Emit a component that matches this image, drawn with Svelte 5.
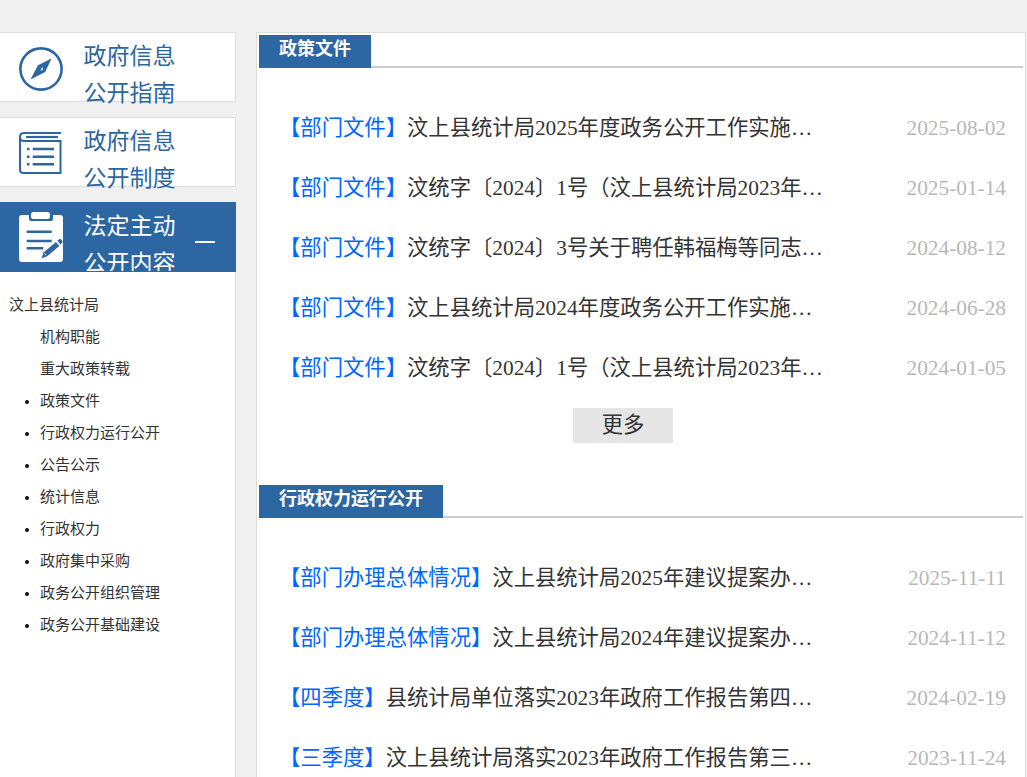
<script>
  const sub = [
    { t: '机构职能', plain: true },
    { t: '重大政策转载', plain: true },
    { t: '政策文件' },
    { t: '行政权力运行公开' },
    { t: '公告公示' },
    { t: '统计信息' },
    { t: '行政权力' },
    { t: '政府集中采购' },
    { t: '政务公开组织管理' },
    { t: '政务公开基础建设' }
  ];
  const sections = [
    {
      title: '政策文件',
      more: true,
      rows: [
        ['部门文件', '汶上县统计局2025年度政务公开工作实施方案的通知', '2025-08-02'],
        ['部门文件', '汶统字〔2024〕1号（汶上县统计局2023年度工作报告）', '2025-01-14'],
        ['部门文件', '汶统字〔2024〕3号关于聘任韩福梅等同志的通知文件', '2024-08-12'],
        ['部门文件', '汶上县统计局2024年度政务公开工作实施方案的通知', '2024-06-28'],
        ['部门文件', '汶统字〔2024〕1号（汶上县统计局2023年度工作报告）', '2024-01-05']
      ]
    },
    {
      title: '行政权力运行公开',
      rows: [
        ['部门办理总体情况', '汶上县统计局2025年建议提案办理工作总体情况', '2025-11-11'],
        ['部门办理总体情况', '汶上县统计局2024年建议提案办理工作总体情况', '2024-11-12'],
        ['四季度', '县统计局单位落实2023年政府工作报告第四季度进展', '2024-02-19'],
        ['三季度', '汶上县统计局落实2023年政府工作报告第三季度进展', '2023-11-24']
      ]
    }
  ];
</script>

<div class="page">
  <aside class="side">
    <div class="card">
      <svg class="ico" viewBox="0 0 44 44" width="44" height="44">
        <circle cx="22" cy="22" r="20.6" fill="none" stroke="#2c66a3" stroke-width="2.6" />
        <path d="M32.5 11.5 L26.2 25 L19 18.2 Z M11.5 32.5 L19 18.2 L26.2 25 Z" fill="#2c66a3" />
        <path d="M23.2 20 L24.2 22.8 L21.4 23.6 Z" fill="#fff" />
      </svg>
      <div class="txt">政府信息<br />公开指南</div>
    </div>
    <div class="card">
      <svg class="ico" viewBox="0 0 44 44" width="44" height="44" fill="none" stroke="#2c66a3">
        <path d="M42 1 H5 Q1 1 1 5 V38 Q1 41 4.5 41 H41.5 V9 H5 Q1 9 1 5" stroke-width="2" />
        <path d="M7 5 H39" stroke-width="2.2" />
        <path d="M13.7 17 H35 M13.7 24.7 H35 M13.7 32.3 H35" stroke-width="2.4" />
        <path d="M8 17 H10.5 M8 24.7 H10.5 M8 32.3 H10.5" stroke-width="2.4" />
      </svg>
      <div class="txt">政府信息<br />公开制度</div>
    </div>
    <div class="card on">
      <svg class="ico" viewBox="0 0 44 50" width="44" height="50">
        <path d="M3 3 H10 V7 Q10 9 12 9 H32 Q34 9 34 7 V3 H41 Q44 3 44 6 V47 Q44 50 41 50 H3 Q0 50 0 47 V6 Q0 3 3 3 Z" fill="#fff" />
        <rect x="12" y="0" width="19" height="7" rx="2.5" fill="#fff" />
        <path d="M7.7 19.7 H32.7 M7.7 29 H32.7 M7.7 36.3 H24.3" stroke="#2c66a3" stroke-width="2.6" />
        <path d="M22.7 46.3 L24.4 40.5 L37 30 L40.4 34 L27.8 44.6 Z" fill="#2c66a3" />
        <path d="M38.4 28.8 L40.6 27 Q41.4 26.4 42 27.2 L43.4 29 Q44 29.8 43.2 30.4 L41.6 32.8 Z" fill="#2c66a3" />
        <path d="M25.4 41.2 L27.2 43.2" stroke="#fff" stroke-width="0.9" />
      </svg>
      <div class="txt">法定主动<br />公开内容</div>
      <span class="dash"></span>
    </div>
    <div class="tree">
      <div class="root">汶上县统计局</div>
      <ul>
        {#each sub as s}
          <li class:plain={s.plain}>{s.t}</li>
        {/each}
      </ul>
    </div>
  </aside>

  <main class="panel">
    {#each sections as sec}
      <section class:hasmore={sec.more}>
        <div class="head"><h2>{sec.title}</h2></div>
        <div class="rows">
          {#each sec.rows as r}
            <div class="row">
              <div class="title"><span class="tag">【{r[0]}】</span>{r[1]}</div>
              <span class="date">{r[2]}</span>
            </div>
          {/each}
        </div>
        {#if sec.more}
          <div class="morewrap"><button class="more">更多</button></div>
        {/if}
      </section>
    {/each}
  </main>
</div>

<style>
  :global(body) {
    margin: 0;
    background: #f0f0f0;
    overflow: hidden;
  }
  .page {
    display: flex;
    align-items: flex-start;
    height: 777px;
    overflow: hidden;
    box-sizing: border-box;
    padding-top: 32px;
    gap: 20px;
    font-family: "Liberation Serif", "Noto Sans CJK SC", serif;
    color: #333;
  }
  .side {
    width: 236px;
    flex: none;
    font-family: "Liberation Sans", "Noto Sans CJK SC", sans-serif;
  }
  .card {
    box-sizing: border-box;
    height: 70px;
    margin-bottom: 15px;
    background: #fff;
    border: 1px solid #ddd;
    border-left: 0;
    display: flex;
    align-items: flex-start;
    position: relative;
    padding-left: 19px;
  }
  .ico {
    flex: none;
    margin-top: 14px;
  }
  .txt {
    margin-left: 21px;
    margin-top: 5px;
    font-size: 23px;
    line-height: 36.8px;
    color: #2c66a3;
    white-space: nowrap;
    position: relative;
    left: -0.5px;
  }
  .card.on {
    background: #2c66a3;
    border-color: #2c66a3;
    margin-bottom: 0;
    overflow: hidden;
  }
  .card.on .txt {
    color: #fff;
  }
  .card.on .ico {
    margin-top: 9px;
  }
  .dash {
    position: absolute;
    left: 195px;
    top: 38px;
    width: 20px;
    height: 2px;
    background: #fff;
  }
  .tree {
    background: #fff;
    border-right: 1px solid #ddd;
    height: 505px;
    padding-top: 17px;
    box-sizing: border-box;
    font-size: 15px;
    line-height: 32px;
  }
  .root {
    padding-left: 9px;
  }
  ul {
    margin: 0;
    padding: 0 0 0 40px;
    list-style: disc;
  }
  li::marker {
    font-size: 13px;
    color: #111;
  }
  li.plain {
    list-style: none;
  }
  .panel {
    box-sizing: border-box;
    width: 770px;
    flex: none;
    background: #fff;
    border: 1px solid #ddd;
    padding: 2px 2px 0 2px;
  }
  section.hasmore {
    margin-bottom: 42px;
  }
  .head {
    border-bottom: 2px solid #ccc;
    height: 31px;
  }
  h2 {
    margin: 0;
    display: inline-block;
    height: 33px;
    padding: 0 20px;
    background: #2c66a3;
    color: #fff;
    font-size: 18px;
    font-weight: 700;
    line-height: 28px;
    font-family: "Liberation Sans", "Noto Sans CJK SC", sans-serif;
  }
  .rows {
    padding: 30px 17px 0 20px;
  }
  .row {
    height: 60px;
    display: flex;
    align-items: baseline;
    justify-content: space-between;
    font-size: 21.33px;
    line-height: 60px;
  }
  .title {
    width: 550px;
    white-space: nowrap;
    overflow: hidden;
    text-overflow: ellipsis;
  }
  .tag {
    color: #0066ff;
  }
  .date {
    color: #b8b8b8;
    white-space: nowrap;
  }
  .morewrap {
    display: flex;
    justify-content: center;
    margin-top: 10px;
    padding-right: 36px;
  }
  .more {
    width: 100px;
    height: 35px;
    border: 0;
    padding: 0;
    background: #e6e6e6;
    color: #333;
    font-family: "Liberation Sans", "Noto Sans CJK SC", sans-serif;
    font-size: 21.33px;
    line-height: 29px;
  }
</style>
